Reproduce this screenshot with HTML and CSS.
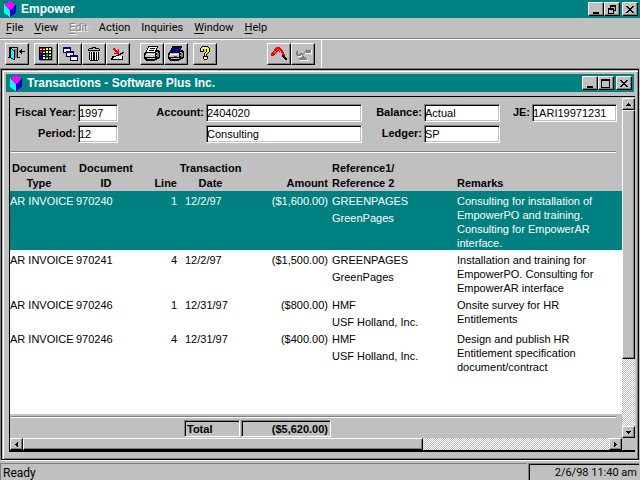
FILE: index.html
```html
<!DOCTYPE html>
<html lang="en">
<head>
<meta charset="utf-8">
<title>Empower</title>
<link rel="stylesheet" href="styles.css">
</head>
<body>
<svg class="defs" aria-hidden="true">
  <symbol id="cube" viewBox="0 0 12 16">
    <path fill="#000080" d="M6 7 12 4v8l-6 4z"/>
    <path fill="#00f" d="M7 8 11 6v6l-4 3z"/>
    <path fill="#0ff" d="M0 3 6 8v8L0 12z"/>
    <path fill="#f0f" d="M6 0 12 4 6 9 0 4z"/>
  </symbol>
  <symbol id="min" viewBox="0 0 10 9"><path d="M2 7h6v2H2z"/></symbol>
  <symbol id="max" viewBox="0 0 10 9"><path fill-rule="evenodd" d="M0 0h9v9H0zM1 2v6h7V2z"/></symbol>
  <symbol id="restore" viewBox="0 0 10 9"><path fill-rule="evenodd" d="M3 0h6v6H7V5h1V2H4v1H3zM1 3h6v6H1zM2 5v3h4V5z"/></symbol>
  <symbol id="close" viewBox="0 0 10 9"><path d="M1 1h2v1h1v1h2V2h1V1h2v1H8v1H7v1H6v1h1v1h1v1h1v1H7V7H6V6H4v1H3v1H1V7h1V6h1V5h1V4H3V3H2V2H1z"/></symbol>
  <symbol id="printer" viewBox="0 0 18 16">
    <path d="M5 0h10v2h-1v2h2v1h1v7h-1v1h-2v1h-2v1H3v-1H2v-1H1V7h1V6h1V4h1V2h1z"/>
    <path class="sheet" d="M6 1h8v1h-1v2h-1v2H4V4h1V2h1z"/>
    <path class="lines" d="M7 2h5v1H7zM6 4h5v1H6z"/>
    <path fill="#c0c0c0" d="M3 7h9v1H3zM13 6h2v1h-2zM2 9h10v2H2zM4 12h8v1H4zM13 9h2v1h-2z"/>
    <path fill="#fff" d="M3 8h9v1H3z"/>
    <path fill="#808080" d="M14 7h2v4h-2z"/>
    <path class="lamp" d="M7 10h3v1H7z"/>
  </symbol>
</svg>

<header class="titlebar">
  <svg class="cube"><use href="#cube"/></svg>
  <h1 class="title">Empower</h1>
  <div class="controls">
    <button class="ctl" aria-label="Minimize"><svg><use href="#min"/></svg></button>
    <button class="ctl" aria-label="Restore"><svg><use href="#restore"/></svg></button>
    <button class="ctl ctl-close" aria-label="Close"><svg><use href="#close"/></svg></button>
  </div>
</header>

<nav class="menu">
  <button><u>F</u>ile</button>
  <button><u>V</u>iew</button>
  <button disabled><u>E</u>dit</button>
  <button>Act<u>i</u>on</button>
  <button>Inquiries</button>
  <button><u>W</u>indow</button>
  <button><u>H</u>elp</button>
</nav>

<div class="toolbar">
  <div class="group">
    <button class="tool" aria-label="Exit"><svg viewBox="0 0 18 16">
      <path d="M1 1h9v10H9V2H2v9h1v1H0v-1h1zM9 11h3v1H9z"/><path fill="#808080" d="M6 3h3v9H6z"/>
      <path d="M2 2h2v1h1v1h2v10H5v-1H3v-1H2z"/><path fill="#0ff" d="M3 3h1v1h1v1h1v8H5v-1H3z"/>
      <path d="M11 5h1V4h1V3h1v2h3v1h-3v2h-1V7h-1V6h-1z"/></svg></button>
  </div>
  <div class="group">
    <button class="tool" aria-label="Grid"><svg viewBox="0 0 18 16">
      <path fill="#808080" d="M3 2h13v13H3z"/><path d="M2 1h13v13H2z"/>
      <path fill="#fff" d="M3 2h2v2H3zM6 2h2v2H6zM9 2h2v2H9zM12 2h2v2h-2zM3 5h2v2H3zM6 5h2v2H6zM9 5h2v2H9zM12 5h2v2h-2zM3 8h2v2H3zM6 8h2v2H6zM9 8h2v2H9zM12 8h2v2h-2zM3 11h2v2H3zM6 11h2v2H6zM9 11h2v2H9zM12 11h2v2h-2z"/>
      <path fill="#f00" d="M3 2h2v1H3zM6 2h2v1H6zM3 5h2v2H3zM6 5h2v1H6z"/>
      <path fill="#ff0" d="M9 2h2v2H9zM12 2h2v1h-2zM9 5h2v1H9zM12 5h2v2h-2z"/>
      <path fill="#00f" d="M3 8h2v2H3zM6 8h2v1H6zM3 11h2v2H3z"/>
      <path fill="#0c0" d="M9 8h2v2H9zM12 8h2v1h-2zM9 11h2v1H9zM12 11h2v2h-2z"/></svg></button>
    <button class="tool" aria-label="Cascade"><svg viewBox="0 0 18 16">
      <path d="M2 1h8v6H2z"/><path fill="#0000c0" d="M2 1h7v2H2z"/><path fill="#fff" d="M3 3h6v3H3z"/>
      <path d="M5 5h8v6H5z"/><path fill="#0000c0" d="M5 5h7v2H5z"/><path fill="#fff" d="M6 7h6v3H6z"/>
      <path d="M9 9h8v6H9z"/><path fill="#0000c0" d="M9 9h7v2H9z"/><path fill="#fff" d="M10 11h6v3h-6z"/></svg></button>
    <button class="tool" aria-label="Delete"><svg viewBox="0 0 18 16">
      <path d="M7 1h4v1h3v1h1v2H3V3h1V2h3zM4 6h10v8h-1v1H5v-1H4z"/>
      <path fill="#c0c0c0" d="M8 2h2v1H8zM4 3h10v1H4z"/><path fill="#fff" d="M5 6h1v8H5zM7 6h1v8H7zM10 6h1v8h-1zM12 6h1v8h-1z"/></svg></button>
    <button class="tool" aria-label="Drill down"><svg viewBox="0 0 18 16">
      <path fill="#fff" d="M4 10h9v3H3z"/><path d="M3 10h4v1H5v1H4v1h10v1H2v-2h1zM7 9h2V8h2V7h2V6h2v1h-1v1h-2v1h-2v1H7zM13 10h1v4h-1z"/>
      <path fill="#f00" d="M4 2h2v1h1v1h1v1h1V3h1v5H5V7h2V6H6V5H5V4H4z"/></svg></button>
  </div>
  <div class="group group-print">
    <button class="tool print" aria-label="Print"><svg><use href="#printer"/></svg></button>
    <button class="tool print-screen" aria-label="Print screen"><svg><use href="#printer"/></svg></button>
  </div>
  <div class="group">
    <button class="tool" aria-label="Help"><svg viewBox="0 0 18 16">
      <path d="M6 0h6v1h1v1h1v4h-1v1h-1v1h-1v2h1v3h-1v1H8v-1H7v-3h1V7h1V6h1V3H8v3H4V2h1V1h1z"/>
      <path fill="#ff0" d="M6 1h6v1h1v4h-1v1h-1v1h-1v2H9V7h1V6h1V3H7v2H5V2h1zM8 11h3v2H8z"/>
      <path fill="#fff" d="M7 1h3v1H7zM5 3h1v2H5zM8 11h1v1H8z"/></svg></button>
  </div>
  <div class="group group-last">
    <button class="tool" aria-label="Up"><svg viewBox="0 0 18 16">
      <path fill="#f00" d="M6 1h4v1h1v1h1v1h1v2h1v2h1v2h-2v1h-1V9h-1V7h-1V6H9V5H8v1H7v1H6v1H5v1H4v1H1V7h1V6h1V5h1V3h1V2h1z"/>
      <path fill="#c0c0c0" d="M7 3h1v1H7zM9 4h1v1h1v2h1v2h-1V7h-1V5H9zM5 5h1v1H5zM4 7h1V6H4z"/>
      <path d="M12 9h2v1h1v1h1v1h1v2h-2v-1h-1v-1h-1v-1h-1z"/></svg></button>
    <button class="tool" aria-label="Balance" disabled><svg viewBox="0 0 18 16">
      <path fill="#fff" d="M3 9h6v2H4zM12 7h5v1h-5zM6 13h8v2H6zM17 4h1v4h-1z"/>
      <path fill="#808080" d="M2 5h2v3h2V7h2v2H7v1H3V9H2zM12 3h1v1h3V3h1v4h-5V6h-1v1h-1v1H9v2h1v1h1v1h2v2H5v-2h2v-1h1V9H7V8h2V7h1V6h1V5h1z"/></svg></button>
  </div>
</div>

<main class="workspace">
  <section class="window">
    <div class="titlebar">
      <svg class="cube"><use href="#cube"/></svg>
      <h2 class="title">Transactions - Software Plus Inc.</h2>
      <div class="controls">
        <button class="ctl" aria-label="Minimize window"><svg><use href="#min"/></svg></button>
        <button class="ctl" aria-label="Maximize window"><svg><use href="#max"/></svg></button>
        <button class="ctl ctl-close" aria-label="Close window"><svg><use href="#close"/></svg></button>
      </div>
    </div>
    <div class="client">
      <div class="view">
        <form class="fields">
          <label for="year">Fiscal Year:</label><input id="year" value="1997">
          <label for="account">Account:</label><input id="account" value="2404020">
          <label for="balance">Balance:</label><input id="balance" value="Actual">
          <label for="je">JE:</label><input id="je" value="1ARI19971231">
          <label for="period">Period:</label><input id="period" value="12">
          <input class="account-name" aria-label="Account name" value="Consulting">
          <label class="ledger" for="ledger">Ledger:</label><input id="ledger" value="SP">
        </form>
        <hr>
        <div class="grid">
          <table>
            <colgroup><col class="c-type"><col class="c-id"><col class="c-line"><col class="c-date"><col class="c-amount"><col class="c-ref"><col></colgroup>
            <thead>
              <tr><th class="type">Document<br>Type</th><th>Document<br>ID</th><th class="num">Line</th><th>Transaction<br>Date</th><th class="num">Amount</th><th class="ref">Reference1/<br>Reference 2</th><th class="left">Remarks</th></tr>
            </thead>
            <tbody>
              <tr class="selected"><td>AR INVOICE</td><td>970240</td><td class="num">1</td><td class="date">12/2/97</td><td class="num">($1,600.00)</td><td class="ref"><div>GREENPAGES</div><div>GreenPages</div></td><td>Consulting for installation of<br>EmpowerPO and training.<br>Consulting for EmpowerAR<br>interface.</td></tr>
              <tr><td>AR INVOICE</td><td>970241</td><td class="num">4</td><td class="date">12/2/97</td><td class="num">($1,500.00)</td><td class="ref"><div>GREENPAGES</div><div>GreenPages</div></td><td>Installation and training for<br>EmpowerPO. Consulting for<br>EmpowerAR interface</td></tr>
              <tr><td>AR INVOICE</td><td>970246</td><td class="num">1</td><td class="date">12/31/97</td><td class="num">($800.00)</td><td class="ref"><div>HMF</div><div>USF Holland, Inc.</div></td><td>Onsite survey for HR<br>Entitlements</td></tr>
              <tr><td>AR INVOICE</td><td>970246</td><td class="num">4</td><td class="date">12/31/97</td><td class="num">($400.00)</td><td class="ref"><div>HMF</div><div>USF Holland, Inc.</div></td><td>Design and publish HR<br>Entitlement specification<br>document/contract</td></tr>
            </tbody>
          </table>
        </div>
        <div class="summary">
          <hr>
          <div class="totals"><span class="total-label">Total</span><output class="total-value">($5,620.00)</output></div>
        </div>
      </div>
      <div class="vscroll">
        <button class="arrow" aria-label="Scroll up"><svg viewBox="0 0 7 7"><path d="M3 2h1v1h1v1h1v1H1V4h1V3h1z"/></svg></button>
        <div class="thumb"></div><div class="track"></div>
        <button class="arrow" aria-label="Scroll down"><svg viewBox="0 0 7 7"><path d="M1 2h5v1H5v1H4v1H3V4H2V3H1z"/></svg></button>
      </div>
      <div class="hscroll">
        <button class="arrow" aria-label="Scroll left"><svg viewBox="0 0 7 7"><path d="M4 1h1v5H4V5H3V4H2V3h1V2h1z"/></svg></button>
        <div class="thumb"></div><div class="track"></div>
        <button class="arrow" aria-label="Scroll right"><svg viewBox="0 0 7 7"><path d="M2 1h1v1h1v1h1v1H4v1H3v1H2z"/></svg></button>
      </div>
    </div>
  </section>
</main>

<footer class="status">
  <span class="message">Ready</span>
  <time class="clock">2/6/98 11:40 am</time>
</footer>
</body>
</html>
```
FILE: styles.css
```css
* { box-sizing: border-box; }

body {
  margin: 0;
  min-height: 100vh;
  display: flex;
  flex-direction: column;
  background: #c0c0c0;
  color: #000;
  font: 11px/14px "Liberation Sans", Arial, sans-serif;
}

button, input { font: inherit; color: inherit; padding: 0; margin: 0; border-radius: 0; }
button { background: #c0c0c0; border: 0; }
svg { display: block; shape-rendering: crispEdges; }
.defs { position: absolute; width: 0; height: 0; }

/* Title bars */
.titlebar {
  display: flex;
  align-items: center;
  height: 18px;
  padding: 0 2px 0 4px;
  background: #008080;
  color: #fff;
}
.cube { width: 12px; height: 16px; }
.title { flex: 1; margin: 0 0 0 5px; font-size: 12px; line-height: 16px; font-weight: bold; }
.controls { display: flex; }
.ctl {
  width: 16px;
  height: 14px;
  padding: 1px 2px;
  color: #000;
  border: 1px solid;
  border-color: #fff #000 #000 #fff;
  box-shadow: inset -1px -1px #808080;
}
.ctl svg { width: 10px; height: 9px; }
.ctl-close { margin-left: 2px; }

/* Menu */
.menu {
  display: flex;
  gap: 11px;
  height: 22px;
  padding: 0 6px 2px;
  border-bottom: 1px solid #fff;
  box-shadow: inset 0 -1px #808080;
}
.menu button { font-family: Roboto, "Liberation Sans", sans-serif; }
.menu u { text-underline-offset: 2px; }
.menu button:disabled { color: #808080; text-shadow: 1px 1px #fff; }

/* Toolbar */
.toolbar { display: flex; gap: 5px; height: 28px; padding-left: 5px; }
.group { display: flex; padding-top: 3px; }
.group-print { margin-left: 5px; }
.group-last { margin-left: 45px; padding-right: 6px; border-right: 1px solid #fff; }
.tool {
  width: 24px;
  height: 22px;
  padding: 2px;
  border: 1px solid;
  border-color: #fff #000 #000 #fff;
  box-shadow: inset -1px -1px #808080;
}
.tool svg { width: 18px; height: 16px; }
.print { --sheet: #fff; --lines: #000; --lamp: #ff0; }
.print-screen { --sheet: #000080; --lines: #000080; --lamp: #f00; }
.sheet { fill: var(--sheet); }
.lines { fill: var(--lines); }
.lamp { fill: var(--lamp); }

/* Document window */
.workspace {
  flex: 1;
  display: flex;
  border: 1px solid;
  border-color: #808080 #c0c0c0 #fff #808080;
}
.window {
  flex: 1;
  display: flex;
  flex-direction: column;
  padding: 3px;
  border: 1px solid #000;
  box-shadow: inset 1px 1px #c0c0c0, inset 2px 2px #fff, inset -1px -1px #808080;
}
.window .titlebar { margin: 1px 1px 0; }
.client {
  flex: 1;
  display: grid;
  grid-template-columns: 1fr 13px;
  grid-template-rows: 1fr 12px;
  margin: 4px 0 4px 4px;
  border: solid #000;
  border-width: 1px 0 2px 1px;
}
.view { display: flex; flex-direction: column; min-width: 0; }

.fields {
  display: grid;
  grid-template-columns: 66px 40px 84px 156px 58px 76px 28px 85px;
  grid-auto-rows: 18px;
  column-gap: 2px;
  row-gap: 3px;
  padding-top: 7px;
  font-weight: bold;
}
.fields label { text-align: right; line-height: 16px; white-space: nowrap; }
.fields input {
  width: 100%;
  min-width: 0;
  height: 18px;
  background: #fff;
  border: 1px solid;
  border-color: #808080 #fff #fff #808080;
  box-shadow: inset 1px 1px #000, inset -1px -1px #c0c0c0;
  font-weight: normal;
}
.account-name { grid-column: 4; }
.ledger { grid-column: 5; }

hr {
  height: 2px;
  margin: 8px 6px 0 1px;
  border: solid;
  border-width: 1px 0;
  border-color: #808080 transparent #fff;
}

.grid { flex: 1; background: #fff; }
table { width: 100%; border-collapse: collapse; table-layout: fixed; }
.c-type { width: 66px; }
.c-id { width: 60px; }
.c-line { width: 42px; }
.c-date { width: 65px; }
.c-amount { width: 86px; }
.c-ref { width: 128px; }
thead { background: #c0c0c0; }
th { padding: 8px 0 0; line-height: 15px; vertical-align: bottom; white-space: nowrap; }
td { padding: 3px 0 0; vertical-align: top; white-space: nowrap; }
td div + div { margin-top: 3px; }
th.left, th.ref { text-align: left; }
.type { padding-right: 8px; }
.num { text-align: right; padding-right: 1px; }
.ref { padding-left: 3px; }
.date { padding-left: 7px; }
.selected { background: #008080; color: #fff; }

.summary hr { margin-top: 2px; }
.totals { display: flex; gap: 1px; padding: 2px 0 1px 174px; font-weight: bold; }
.totals > * {
  height: 17px;
  padding: 1px 2px;
  border: 1px solid;
  border-color: #808080 #fff #fff #808080;
  box-shadow: inset 1px 1px #000;
}
.total-label { width: 56px; }
.total-value { width: 90px; text-align: right; }

/* Scroll bars */
.vscroll { display: flex; flex-direction: column; padding-top: 1px; }
.hscroll { display: flex; }
.arrow, .thumb { border: 1px solid; border-color: #fff #000 #000 #fff; box-shadow: inset -1px -1px #808080; }
.arrow { display: grid; place-items: center; width: 13px; height: 12px; }
.arrow svg { width: 7px; height: 7px; }
.vscroll .thumb { flex: 249; }
.vscroll .track { flex: 67; }
.hscroll .thumb { flex: 399; }
.hscroll .track { flex: 187; }
.track { background: repeating-conic-gradient(#fff 0 25%, #c0c0c0 0 50%) 0 0 / 2px 2px; }

/* Status bar */
.status {
  display: flex;
  gap: 1px;
  height: 19px;
  padding: 2px 1px 0 0;
  font-family: Roboto, "Liberation Sans", sans-serif;
}
.message, .clock { padding: 2px; border: solid #808080; border-width: 1px 0 0 1px; }
.message { flex: 1; font-size: 12px; }
.clock { width: 111px; text-align: right; box-shadow: inset 1px 1px #000; }
```
